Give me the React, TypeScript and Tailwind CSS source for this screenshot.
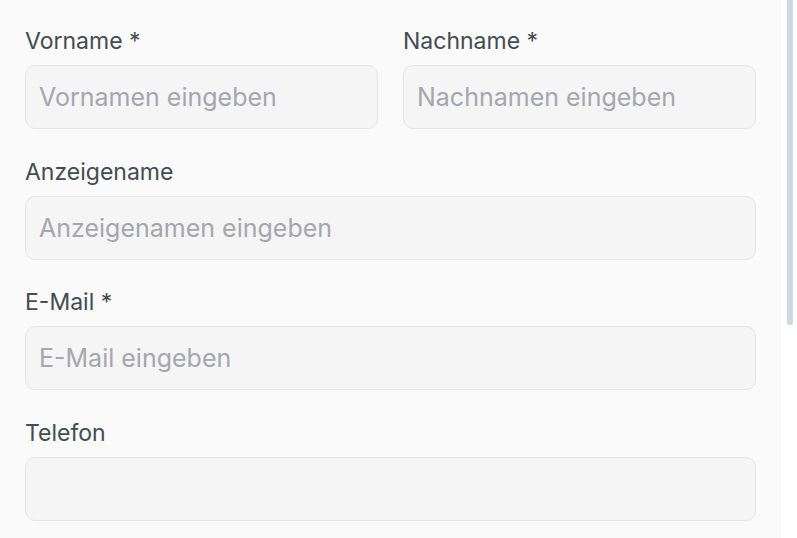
const fieldClass =
  "h-[64px] w-full rounded-[10px] border border-[#e6e6e6] bg-[#f5f5f5] px-[13px] text-[25px] text-[#384047] placeholder:text-[#a6a6ae] outline-none";

const labelClass = "block mb-[10px] text-[23px] leading-[28px] font-normal text-[#424c51]";

const Field = ({ label, placeholder }: { label: string; placeholder?: string }) => (
  <div>
    <label className={labelClass}>{label}</label>
    <input className={fieldClass} placeholder={placeholder} />
  </div>
);

export default function App() {
  return (
    <div className="flex h-[538px] w-[797px] overflow-hidden bg-white" style={{ fontFamily: "Inter, 'Noto Sans', sans-serif" }}>
      {/* form panel */}
      <div className="w-[781px] shrink-0 bg-[#fafafa] px-[25px] pt-[27px]">
        <div className="flex flex-col gap-[28.5px]">
          <div className="grid grid-cols-2 gap-[25px]">
            <Field label="Vorname *" placeholder="Vornamen eingeben" />
            <Field label="Nachname *" placeholder="Nachnamen eingeben" />
          </div>
          <Field label="Anzeigename" placeholder="Anzeigenamen eingeben" />
          <Field label="E-Mail *" placeholder="E-Mail eingeben" />
          <Field label="Telefon" />
        </div>
      </div>

      {/* scrollbar */}
      <div className="flex w-[16px] shrink-0 justify-center bg-white pl-[1px]">
        <div className="h-[325px] w-[6px] rounded-b-full bg-[#cdd8e2]" />
      </div>
    </div>
  );
}
